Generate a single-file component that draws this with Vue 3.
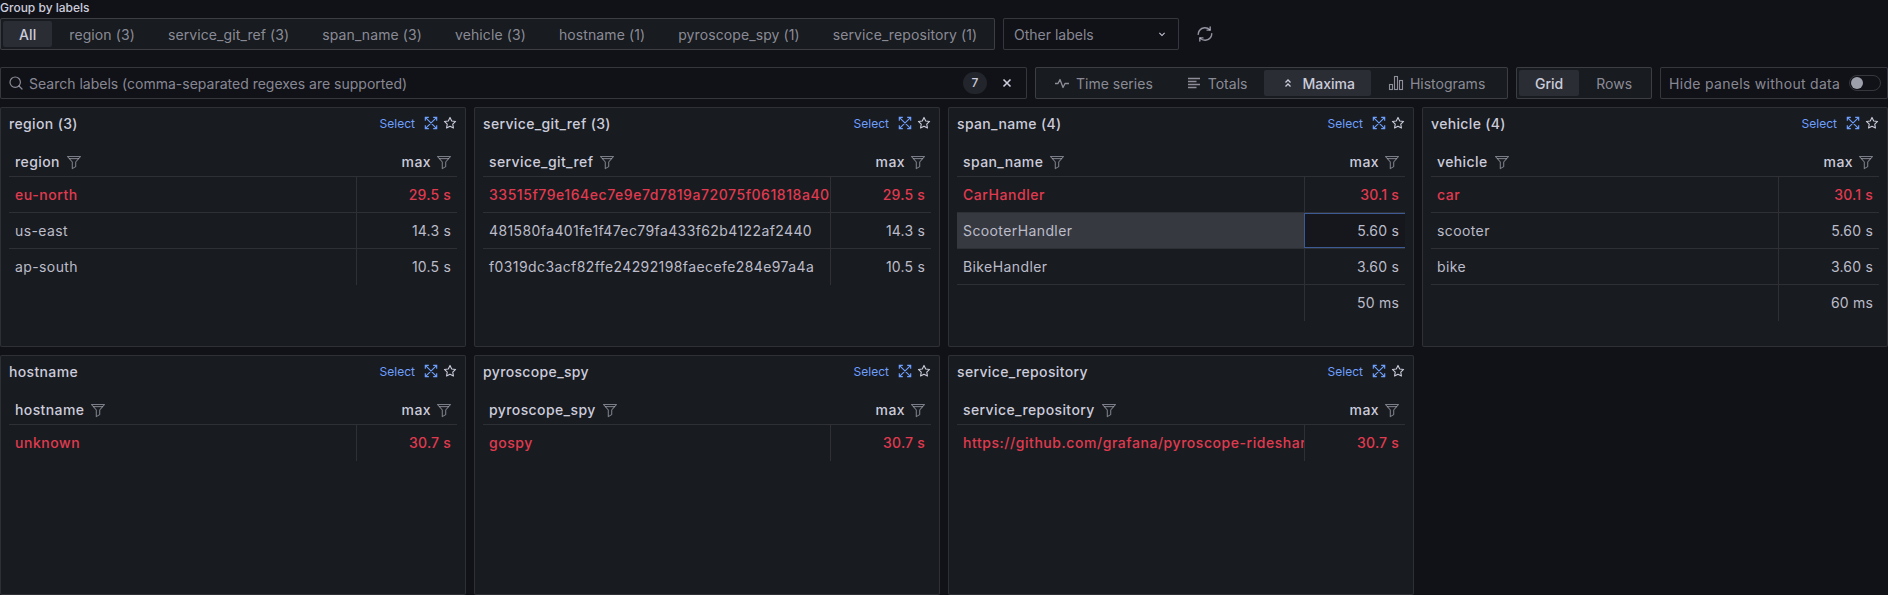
<script setup>
const tabs = ['All','region (3)','service_git_ref (3)','span_name (3)','vehicle (3)','hostname (1)','pyroscope_spy (1)','service_repository (1)']
const panels = [
  { name:'region', count:3, rows:[['eu-north','29.5 s'],['us-east','14.3 s'],['ap-south','10.5 s']] },
  { name:'service_git_ref', count:3, rows:[['33515f79e164ec7e9e7d7819a72075f061818a40','29.5 s'],['481580fa401fe1f47ec79fa433f62b4122af2440','14.3 s'],['f0319dc3acf82ffe24292198faecefe284e97a4a','10.5 s']] },
  { name:'span_name', count:4, hover:1, rows:[['CarHandler','30.1 s'],['ScooterHandler','5.60 s'],['BikeHandler','3.60 s'],['','50 ms']] },
  { name:'vehicle', count:4, rows:[['car','30.1 s'],['scooter','5.60 s'],['bike','3.60 s'],['','60 ms']] },
  { name:'hostname', rows:[['unknown','30.7 s']] },
  { name:'pyroscope_spy', rows:[['gospy','30.7 s']] },
  { name:'service_repository', rows:[['https://github.com/grafana/pyroscope-rideshare-go','30.7 s']] },
]
</script>

<template>
  <div class="page">
    <div class="group-title">Group by labels</div>
    <div class="row">
      <div class="seg tabs">
        <span v-for="(t,i) in tabs" :key="t" class="opt" :class="{active:i===0}">{{ t }}</span>
      </div>
      <div class="select">
        <span>Other labels</span>
        <svg class="chev" viewBox="0 0 16 16" width="12" height="12"><path d="M4.5 6.5 8 10l3.5-3.5" fill="none" stroke="currentColor" stroke-width="1.4"/></svg>
      </div>
      <svg class="sync" viewBox="0 0 24 24" width="18" height="18" fill="none" stroke="currentColor" stroke-width="1.9" stroke-linecap="round" stroke-linejoin="round">
        <path d="M18.5 6.5A9 9 0 0 0 4.6 7.3 9 9 0 0 0 3 12.5"/><path d="M18.9 2.6v4.2h-4.2"/>
        <path d="M5.5 17.5a9 9 0 0 0 13.9-.8 9 9 0 0 0 1.6-5.2"/><path d="M5.1 21.4v-4.2h4.2"/>
      </svg>
    </div>
    <div class="row second">
      <div class="search">
        <svg viewBox="0 0 16 16" width="16" height="16" fill="none" stroke="currentColor" stroke-width="1.2" stroke-linecap="round"><circle cx="7.2" cy="7.2" r="5.2"/><path d="m11 11 3 3"/></svg>
        <span class="ph">Search labels (comma-separated regexes are supported)</span>
        <span class="badge">7</span>
        <svg class="x" viewBox="0 0 16 16" width="16" height="16" fill="none" stroke="currentColor" stroke-width="1.6"><path d="m4.5 4.5 7 7M11.5 4.5l-7 7"/></svg>
      </div>
      <div class="seg views">
        <span class="opt">
          <svg viewBox="0 0 16 16" width="16" height="16" fill="none" stroke="currentColor" stroke-width="1.3" stroke-linejoin="round"><path d="M1 8.5h3l2-4 3 8 2-4h4"/></svg>Time series
        </span>
        <span class="opt">
          <svg viewBox="0 0 16 16" width="16" height="16" fill="none" stroke="currentColor" stroke-width="1.3"><path d="M2 3.5h12M2 6.5h8.5M2 9.5h12M2 12.5h8.5"/></svg>Totals
        </span>
        <span class="opt active">
          <svg viewBox="0 0 16 16" width="16" height="16" fill="none" stroke="currentColor" stroke-width="1.3"><path d="m5.5 7.5 2.5-2.5 2.5 2.5M5.5 11.5 8 9l2.5 2.5"/></svg>Maxima
        </span>
        <span class="opt">
          <svg viewBox="0 0 16 16" width="16" height="16" fill="none" stroke="currentColor" stroke-width="1.1"><rect x="1.5" y="9.5" width="3" height="5"/><rect x="6.5" y="1.5" width="3" height="13"/><rect x="11.5" y="5.5" width="3" height="9"/></svg>Histograms
        </span>
      </div>
      <div class="seg layouts">
        <span class="opt active">Grid</span>
        <span class="opt">Rows</span>
      </div>
      <div class="hide">
        <span>Hide panels without data</span>
        <span class="switch"><i></i></span>
      </div>
    </div>

    <div class="grid">
      <section v-for="p in panels" :key="p.name" class="panel">
        <header class="phead">
          <span class="ptitle">{{ p.name }}<template v-if="p.count"> ({{ p.count }})</template></span>
          <span class="select-link">Select</span>
          <svg class="expand" viewBox="0 0 16 16" width="14" height="14" fill="none" stroke="currentColor" stroke-width="1.3"><path d="M1.5 5.5v-4h4M1.5 1.5l13 13M14.5 10.5v4h-4M10.5 1.5h4v4M14.5 1.5l-13 13M1.5 10.5v4h4"/></svg>
          <svg class="star" viewBox="0 0 16 16" width="14" height="14" fill="none" stroke="currentColor" stroke-width="1.25" stroke-linejoin="round"><path d="m8 1.6 1.95 4.05 4.45.6-3.25 3.1.8 4.4L8 11.6l-3.95 2.15.8-4.4L1.6 6.25l4.45-.6z"/></svg>
        </header>
        <div class="table">
          <div class="thead">
            <div class="th">{{ p.name }}
              <svg viewBox="0 0 16 16" width="16" height="16" fill="none" stroke="currentColor" stroke-width="1.1" stroke-linejoin="round"><path d="M1.5 2.5h13l-4.8 5.5v4.6l-3.4 2V8z"/><path d="M3.2 4.6h9.6"/></svg>
            </div>
            <div class="th right">max
              <svg viewBox="0 0 16 16" width="16" height="16" fill="none" stroke="currentColor" stroke-width="1.1" stroke-linejoin="round"><path d="M1.5 2.5h13l-4.8 5.5v4.6l-3.4 2V8z"/><path d="M3.2 4.6h9.6"/></svg>
            </div>
          </div>
          <div v-for="(r,i) in p.rows" :key="i" class="tr" :class="{first:i===0, hover:p.hover===i, last:i===p.rows.length-1}">
            <div class="td label">{{ r[0] }}</div>
            <div class="td value">{{ r[1] }}</div>
          </div>
        </div>
      </section>
    </div>
  </div>
</template>

<style>
html, body { margin: 0; background: #111217; overflow: hidden; }
</style>

<style scoped>
.page {
  width: 1888px;
  height: 595px;
  overflow: hidden;
  background: #111217;
  color: #ccccdc;
  font-family: Inter, "Noto Sans", sans-serif;
  font-size: 14px;
  box-sizing: border-box;
}
.group-title {
  height: 18px;
  font-size: 12px;
  font-weight: 500;
  line-height: 15px;
}
.row {
  display: flex;
  align-items: center;
  gap: 8px;
  height: 32px;
}
.second { margin-top: 17px; }
.seg {
  display: flex;
  box-sizing: border-box;
  align-items: center;
  height: 32px;
  padding: 0 2px;
  background: #181b1f;
  border: 1px solid rgba(204,204,220,.2);
  border-radius: 2px;
  flex: none;
}
.opt {
  display: flex;
  align-items: center;
  gap: 6px;
  height: 26px;
  padding: 0 16px;
  margin-right: 1px;
  color: rgba(204,204,220,.65);
  border-radius: 2px;
  white-space: nowrap;
}
.opt:last-child { margin-right: 0; }
.opt.active {
  background: #2a2e34;
  color: #ccccdc;
  font-weight: 500;
}
.tabs { width: 995px; letter-spacing: .1px; }
.select {
  display: flex;
  box-sizing: border-box;
  align-items: center;
  justify-content: space-between;
  width: 176px;
  height: 32px;
  padding: 0 10px;
  background: #111217;
  border: 1px solid rgba(204,204,220,.2);
  border-radius: 2px;
  color: rgba(204,204,220,.65);
}
.chev { color: #ccccdc; }
.sync { margin-left: 9px; color: rgba(204,204,220,.7); }
.search {
  display: flex;
  flex: 1;
  align-items: center;
  box-sizing: border-box;
  height: 32px;
  padding: 0 11px 0 7px;
  background: #111217;
  border: 1px solid rgba(204,204,220,.2);
  border-radius: 2px;
  color: rgba(204,204,220,.65);
}
.ph { margin-left: 5px; flex: 1; }
.badge {
  width: 24px;
  height: 22px;
  border-radius: 11px;
  background: #22252b;
  color: #ccccdc;
  font-size: 12px;
  font-weight: 500;
  line-height: 22px;
  text-align: center;
}
.x { margin-left: 12px; color: #ccccdc; }
.views { width: 473px; }
.layouts { width: 136px; }
.hide {
  display: flex;
  flex: none;
  width: 228px;
  align-items: center;
  justify-content: space-between;
  box-sizing: border-box;
  height: 32px;
  padding: 0 6px 0 8px;
  background: #111217;
  border: 1px solid rgba(204,204,220,.2);
  border-radius: 2px;
  color: rgba(204,204,220,.65);
  letter-spacing: .3px;
}
.switch {
  position: relative;
  display: block;
  box-sizing: border-box;
  width: 32px;
  height: 16px;
  border: 1px solid rgba(204,204,220,.2);
  border-radius: 8px;
}
.switch i {
  position: absolute;
  left: 1px;
  top: 1px;
  width: 12px;
  height: 12px;
  border-radius: 50%;
  background: #9da0ab;
}
.grid {
  display: grid;
  grid-template-columns: repeat(4, 466px);
  grid-auto-rows: 240px;
  gap: 8px;
  margin-top: 8px;
}
.panel {
  box-sizing: border-box;
  padding: 7px 8px 8px;
  background: #181b1f;
  border: 1px solid rgba(204,204,220,.12);
  border-radius: 2px;
}
.phead {
  display: flex;
  align-items: center;
  height: 16px;
}
.ptitle {
  flex: 1;
  font-weight: 500;
  white-space: nowrap;
  letter-spacing: .35px;
}
.select-link {
  font-size: 12px;
  color: #6e9fff;
}
.expand { margin-left: 9px; color: #6e9fff; }
.star { margin-left: 5px; color: #ccccdc; }
.table { margin-top: 10px; letter-spacing: .4px; }
.thead, .tr {
  display: grid;
  grid-template-columns: 347px 101px;
  box-sizing: border-box;
  height: 36px;
}
.thead { border-bottom: 1px solid rgba(204,204,220,.12); }
.th {
  display: flex;
  align-items: center;
  gap: 6px;
  padding: 6px 6px 0;
  font-weight: 500;
}
.th svg { color: rgba(204,204,220,.55); flex: none; }
.th.right { justify-content: flex-end; gap: 5px; padding-right: 5px; }
.tr { border-bottom: 1px solid rgba(204,204,220,.12); }
.tr.last { border-bottom: none; }
.td {
  box-sizing: border-box;
  padding: 0 6px;
  line-height: 35px;
  white-space: nowrap;
  overflow: hidden;
  color: #bcbcca;
}
.label { padding-right: 0; }
.value {
  text-align: right;
  letter-spacing: .2px;
  border-left: 1px solid rgba(204,204,220,.12);
}
.tr.first .td { color: #e03a50; font-weight: 500; }
.tr.first .label { letter-spacing: .55px; }
.tr.hover .label { background: #36393f; }
.tr.hover .value {
  background: #15171c;
  border: 1px solid #3d5a94;
  border-right: none;
  line-height: 33px;
}
</style>
